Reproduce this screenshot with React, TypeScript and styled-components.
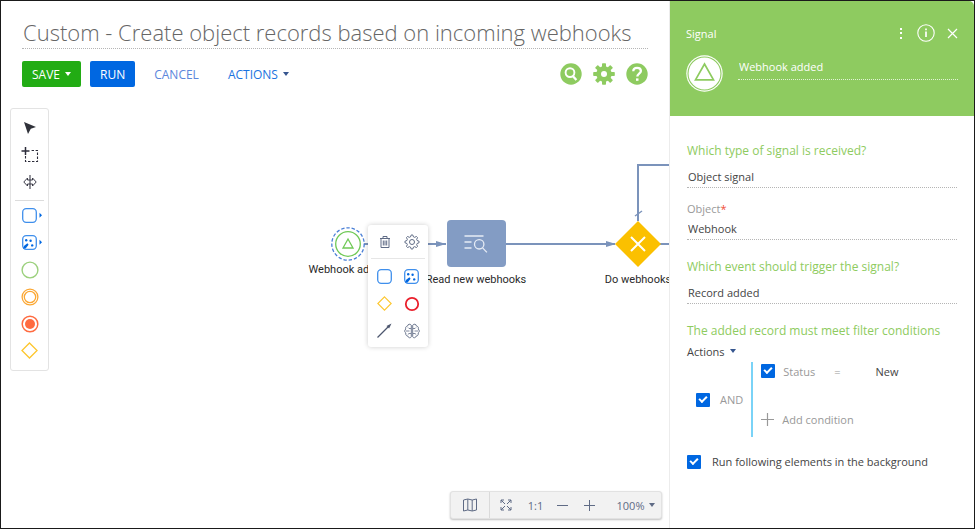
import React from "react";
import styled, { createGlobalStyle, css } from "styled-components";

const GlobalStyle = createGlobalStyle`
  *, *::before, *::after { box-sizing: border-box; }
  body {
    margin: 0;
    background: #fff;
    color: #444;
    font-family: "Open Sans", "Noto Sans", sans-serif;
    font-size: 11px;
  }
  button, input, select { font: inherit; color: inherit; margin: 0; }
  button { cursor: pointer; border: 0; padding: 0; background: none; }
  svg { display: block; flex: none; }
`;

const green = "#8ecb60";
const blue = "#0067e1";
const steel = "#7b93bb";
const slate = "#5f6b85";

/* ---------- page ---------- */

const Frame = styled.div`
  display: flex;
  min-height: 100vh;
  border: 1px solid #1a1a1a;
`;

const Workspace = styled.main`
  flex: 1;
  min-width: 0;
  display: flex;
  flex-direction: column;
`;

const Header = styled.header`
  padding: 15px 21px 14px;
`;

const TitleInput = styled.input`
  display: block;
  width: 100%;
  height: 33px;
  padding: 0 1px;
  border: 0;
  border-bottom: 1px dotted #b5b5b5;
  outline: 0;
  background: none;
  color: #666;
  font-size: 22px;
  font-weight: 300;
`;

const Toolbar = styled.div`
  display: flex;
  align-items: center;
  gap: 9px;
  margin-top: 12px;
`;

const ToolbarButton = styled.button<{ $kind: "save" | "run" | "link" | "plain" }>`
  display: flex;
  align-items: center;
  gap: 5px;
  height: 26px;
  padding: 0 10px;
  border-radius: 2px;
  font-size: 12px;
  color: #fff;
  ${({ $kind }) => $kind === "save" && css`background: #22ac14;`}
  ${({ $kind }) => $kind === "run" && css`background: ${blue};`}
  ${({ $kind }) => $kind === "link" && css`color: #5b86dc;`}
  ${({ $kind }) => $kind === "plain" && css`color: #1a73e0;`}
`;

const Caret = styled.span`
  width: 0;
  height: 0;
  border: 3px solid transparent;
  border-top: 4px solid currentColor;
  border-bottom: 0;
`;

const NavyCaret = styled(Caret)`
  color: #36568f;
`;

const HeaderIcons = styled.div`
  display: flex;
  gap: 11px;
  margin-left: auto;
`;

const IconButton = styled.button`
  display: flex;
  align-items: center;
  justify-content: center;
`;

/* ---------- canvas ---------- */

const Canvas = styled.section`
  position: relative;
  flex: 1;
  min-height: 400px;
  overflow: hidden;
`;

const Edges = styled.svg`
  position: absolute;
  inset: 0;
  width: 100%;
  height: 100%;
`;

const Node = styled.div<{ $x: number; $y: number }>`
  position: absolute;
  left: ${({ $x }) => $x}px;
  top: ${({ $y }) => $y}px;
  display: flex;
  flex-direction: column;
  align-items: center;
  width: 100px;
`;

const NodeLabel = styled.span<{ $gap: number }>`
  margin-top: ${({ $gap }) => $gap}px;
  font-family: Roboto, "Open Sans", sans-serif;
  line-height: 16px;
  white-space: nowrap;
  color: #2a2a2a;
`;

const TaskBox = styled.div`
  display: flex;
  align-items: center;
  justify-content: center;
  width: 59px;
  height: 47px;
  border-radius: 4px;
  background: #839cc4;
`;

const Palette = styled.nav`
  position: absolute;
  left: 9px;
  top: 7px;
  display: flex;
  flex-direction: column;
  width: 39px;
  padding: 5px 0 6px;
  border: 1px solid #e3e3e3;
  border-radius: 3px;
  background: #fff;
`;

const PaletteButton = styled(IconButton)`
  height: 27px;
`;

const PaletteRule = styled.hr`
  width: 29px;
  margin: 5px auto 1px;
  border: 0;
  border-top: 1px solid #dcdcdc;
`;

const ContextMenu = styled.div`
  position: absolute;
  left: 367px;
  top: 124px;
  width: 60px;
  padding: 3px;
  border-radius: 3px;
  background: #fff;
  box-shadow: 0 0 5px rgba(0, 0, 0, 0.2);
`;

const MenuGrid = styled.div<{ $ruled?: boolean }>`
  display: grid;
  grid-template-columns: 1fr 1fr;
  grid-auto-rows: 27px;
  ${({ $ruled }) =>
    $ruled &&
    css`
      padding-bottom: 3px;
      margin-bottom: 4px;
      border-bottom: 1px solid #e6e6e6;
    `}
`;

const ZoomBar = styled.div`
  position: absolute;
  right: 7px;
  bottom: 9px;
  display: flex;
  align-items: center;
  width: 212px;
  height: 28px;
  border: 1px solid #e2e2e2;
  border-radius: 3px;
  background: #f2f2f2;
  color: ${slate};
  box-shadow: 0 1px 2px rgba(0, 0, 0, 0.25);
`;

const MapButton = styled(IconButton)`
  width: 39px;
  height: 100%;
  border-right: 1px solid #dadada;
`;

const ZoomStep = styled(IconButton)<{ $grow?: boolean }>`
  height: 100%;
  flex: ${({ $grow }) => ($grow ? "1" : "0 0 27px")};
  gap: 5px;
  padding-left: ${({ $grow }) => ($grow ? "8px" : "0")};
`;

const FitButton = styled(ZoomStep)`
  flex-basis: 32px;
`;

/* ---------- properties panel ---------- */

const Panel = styled.aside`
  flex: none;
  width: 305px;
  border-left: 1px solid #ececec;
`;

const PanelHead = styled.header`
  padding: 20px 16px 21px;
  border-top-right-radius: 5px;
  background: ${green};
  color: #fff;
`;

const PanelTop = styled.div`
  display: flex;
  align-items: center;
  justify-content: space-between;
  height: 24px;
`;

const PanelKind = styled.h2`
  margin: 0;
  font-size: 11px;
  font-weight: 400;
`;

const PanelActions = styled.div`
  display: flex;
  align-items: center;
  gap: 12px;
`;

const NameRow = styled.div`
  display: flex;
  gap: 15px;
  margin-top: 10px;
  height: 40px;
`;

const NameInput = styled.input`
  flex: 1;
  min-width: 0;
  height: 25px;
  padding: 0 1px 2px;
  border: 0;
  border-bottom: 1px dotted #e2f3d6;
  outline: 0;
  background: none;
`;

const PanelBody = styled.form`
  padding: 25px 17px 20px;
`;

const questionStyle = css`
  display: block;
  margin: 0;
  font-size: 12px;
  font-weight: 400;
  line-height: 20px;
  color: ${green};
`;

const Question = styled.label`
  ${questionStyle}
`;

const SectionTitle = styled.h3`
  ${questionStyle}
`;

const fieldStyle = css`
  display: block;
  width: 100%;
  height: 23px;
  padding: 0 1px;
  border: 0;
  border-bottom: 1px dotted #b5b5b5;
  border-radius: 0;
  outline: 0;
  background: none;
  color: #444;
`;

const Select = styled.select`
  ${fieldStyle}
  appearance: none;
  margin: 4px 0 0;
`;

const LookupInput = styled.input`
  ${fieldStyle}
`;

const FieldBlock = styled.div`
  margin: 12px 0 17px;
`;

const FieldLabel = styled.label`
  display: block;
  line-height: 17px;
  color: #999;
`;

const Required = styled.span`
  color: #f04e37;
`;

const Spaced = styled.div`
  margin-bottom: 17px;
`;

const ActionsMenu = styled.button`
  display: flex;
  align-items: center;
  gap: 5px;
  height: 20px;
`;

const FilterGroup = styled.div`
  display: flex;
  align-items: center;
  margin-top: 1px;
  padding-left: 9px;
`;

const CheckLabel = styled.label<{ $muted?: boolean; $gap: number }>`
  display: flex;
  align-items: center;
  gap: ${({ $gap }) => $gap}px;
  color: ${({ $muted }) => ($muted ? "#999" : "#444")};
`;

const CheckInput = styled.input`
  appearance: none;
  flex: none;
  width: 14px;
  height: 14px;
  border-radius: 1px;
  background: ${blue};
  display: grid;
  place-items: center;

  &:checked::after {
    content: "";
    width: 8px;
    height: 5px;
    margin-bottom: 3px;
    border: solid #fff;
    border-width: 0 0 2px 2px;
    transform: rotate(-45deg);
  }
`;

const Conditions = styled.div`
  display: flex;
  flex-direction: column;
  justify-content: space-between;
  flex: 1;
  height: 75px;
  margin-left: 8px;
  padding: 0 0 9px 8px;
  border-left: 2px solid #7ad3f7;
`;

const ConditionRow = styled.div`
  display: flex;
  align-items: center;
  height: 18px;
  color: #999;
`;

const Operator = styled.span`
  margin-left: 19px;
`;

const ConditionValue = styled.span`
  margin-left: 35px;
  color: #444;
`;

const AddCondition = styled.button`
  display: flex;
  align-items: center;
  gap: 8px;
  height: 18px;
  color: #999;
`;

const BackgroundOption = styled.div`
  margin-top: 17px;
`;

/* ---------- icons ---------- */

const SearchIcon = () => (
  <svg width="22" height="22" viewBox="0 0 22 22" fill="none">
    <circle cx="11" cy="11" r="10.7" fill={green} />
    <circle cx="10" cy="9.6" r="4.4" stroke="#fff" strokeWidth="1.9" />
    <path d="M12.8 13l3.6 4" stroke="#fff" strokeWidth="2.3" />
  </svg>
);

const SettingsIcon = () => (
  <svg width="22" height="22" viewBox="-11 -11 22 22">
    <g fill={green}>
      {[0, 45, 90, 135].map((a) => (
        <rect key={a} x="-2" y="-10.8" width="4" height="21.6" rx="0.8" transform={`rotate(${a})`} />
      ))}
      <circle r="7.7" />
    </g>
    <circle r="3" fill="#fff" />
  </svg>
);

const HelpIcon = () => (
  <svg width="22" height="22" viewBox="0 0 22 22" fill="none">
    <circle cx="11" cy="11" r="10.7" fill={green} />
    <path d="M7.3 8.3c0-2.2 1.5-3.5 3.8-3.5s3.8 1.3 3.8 3.2c0 2.6-3.6 2.7-3.6 5.6" stroke="#fff" strokeWidth="2.3" />
    <rect x="10" y="15.4" width="2.5" height="2.4" fill="#fff" />
  </svg>
);

const PointerIcon = () => (
  <svg width="14" height="14" viewBox="0 0 14 14">
    <path d="M1 1l12 5-5.2 1.8L5 13z" fill="#30323a" />
  </svg>
);

const MarqueeIcon = () => (
  <svg width="18" height="16" viewBox="0 0 18 16" fill="none" stroke="#2c2c3a">
    <path d="M4.5 0v8M.5 4h8" strokeWidth="1.5" />
    <path d="M4.5 9v5.5h12V3.5H10" strokeDasharray="2.4 1.6" strokeWidth="1.1" />
  </svg>
);

const SplitIcon = () => (
  <svg width="14" height="14" viewBox="0 0 14 14" fill="none" stroke="#3b3b48">
    <path d="M7 0v14" strokeWidth="1.1" />
    <path d="M4.5 3L.8 7l3.7 4V9h5v2l3.7-4-3.7-4v2h-5z" />
  </svg>
);

const Dots = () => (
  <g fill={blue}>
    <circle cx="4.2" cy="5.2" r="1.2" />
    <circle cx="8.6" cy="5.8" r="1.2" />
    <circle cx="10.2" cy="10.4" r="1.2" />
    <path d="M1 13.5l1.2-2.8 3.2-2.5 1.2 1.5-3 3.8z" />
  </g>
);

const TaskIcon = ({ dots, arrow }: { dots?: boolean; arrow?: boolean }) => (
  <svg width={arrow ? 27 : 15} height="15" viewBox={arrow ? "-6 0 27 15" : "0 0 15 15"} fill="none">
    <rect x="0.7" y="0.7" width="13.6" height="13.6" rx="3.5" stroke="#3f8fec" strokeWidth="1.3" />
    {dots && <Dots />}
    {arrow && <path d="M17.5 4.8v5l2.5-2.5z" fill={blue} />}
  </svg>
);

const StartIcon = () => (
  <svg width="18" height="18" viewBox="0 0 18 18" fill="none">
    <circle cx="9" cy="9" r="7.9" stroke="#9bd07c" strokeWidth="1.4" />
  </svg>
);

const IntermediateIcon = () => (
  <svg width="18" height="18" viewBox="0 0 18 18" fill="none" stroke="#fba733">
    <circle cx="9" cy="9" r="7.9" strokeWidth="1.3" />
    <circle cx="9" cy="9" r="5.7" strokeWidth="1.3" />
  </svg>
);

const TerminateIcon = () => (
  <svg width="18" height="18" viewBox="0 0 18 18" fill="none">
    <circle cx="9" cy="9" r="7.8" stroke="#ff6b40" strokeWidth="1.5" />
    <circle cx="9" cy="9" r="5" fill="#ff6b40" />
  </svg>
);

const EndIcon = () => (
  <svg width="16" height="16" viewBox="0 0 16 16" fill="none">
    <circle cx="8" cy="8" r="6.2" stroke="#ea1f2b" strokeWidth="1.8" />
  </svg>
);

const GatewayIcon = ({ size }: { size: number }) => (
  <svg width={size} height={size} viewBox="0 0 16 16" fill="none">
    <path d="M8 .9L15.1 8 8 15.1.9 8z" stroke="#fdc62e" strokeWidth="1.2" />
  </svg>
);

const TrashIcon = () => (
  <svg width="12" height="14" viewBox="0 0 12 14" fill="none" stroke={slate}>
    <path d="M1 3.5h10M4 3V1.5h4V3M2 3.5v9h8v-9M4.3 5.5v5M6 5.5v5M7.7 5.5v5" />
  </svg>
);

const GearIcon = () => (
  <svg width="16" height="16" viewBox="-8 -8 16 16" fill="none" stroke={slate}>
    <path
      d={
        Array.from({ length: 32 }, (_, i) => {
          const radius = i % 4 < 2 ? 7.1 : 5.3;
          const angle = ((i - 0.5) * Math.PI) / 16;
          return `${i ? "L" : "M"}${(radius * Math.sin(angle)).toFixed(2)} ${(-radius * Math.cos(angle)).toFixed(2)}`;
        }).join("") + "z"
      }
      strokeWidth="1"
      strokeLinejoin="round"
    />
    <circle r="2.5" />
  </svg>
);

const ConnectorIcon = () => (
  <svg width="15" height="15" viewBox="0 0 15 15">
    <path d="M.5 14.5L11 4" stroke="#4c566e" strokeWidth="1.3" />
    <path d="M14.5.5l-2.4 5-2.6-2.6z" fill="#4c566e" />
  </svg>
);

const BrainIcon = () => (
  <svg width="16" height="16" viewBox="0 0 16 16" fill="none" stroke={slate} strokeLinejoin="round">
    <path d="M7.3 2.2C6 .5 3.8 1 3.6 3 1.5 3.4 1.3 5 1.8 6 .3 7.2.4 9.2 1.8 10c-.4 1.8.6 3 2 3.1.5 1.9 2.7 2.3 3.5.7zM8.7 2.2C10 .5 12.2 1 12.4 3c2.1.4 2.3 2 1.8 3 1.5 1.2 1.4 3.2 0 4 .4 1.8-.6 3-2 3.1-.5 1.9-2.7 2.3-3.5.7z" strokeWidth=".9" />
    <path d="M7 5.5H5L4 4.500M2 8h3.500M7 10.500H5l-1.200 1M9 5.500h2l1-1M14 8h-3.500M9 10.500h2l1.200 1" strokeWidth=".8" />
  </svg>
);

const QueryIcon = () => (
  <svg width="24" height="20" viewBox="0 0 24 20" fill="none" stroke="#e6ecf5" strokeWidth="1.3">
    <path d="M.5 2h19M.5 8h7M.5 14h7" />
    <circle cx="15.2" cy="10.3" r="4.7" />
    <path d="M18.6 13.9l4.3 4.5" />
  </svg>
);

const MapIcon = () => (
  <svg width="16" height="14" viewBox="0 0 16 14" fill="none" stroke={slate}>
    <path d="M1.5 2l4.3-1 4.4 1 4.3-1v11l-4.3 1-4.4-1-4.3 1zM5.8 1v11M10.2 2v11" />
  </svg>
);

const FitIcon = () => (
  <svg width="12" height="12" viewBox="0 0 12 12" fill="none" stroke={slate}>
    <path d="M1 4V1h3M8 1h3v3M11 8v3H8M4 11H1V8M1 1l4 4M11 1L7 5M11 11L7 7M1 11l4-4" />
  </svg>
);

const DotsIcon = () => (
  <svg width="8" height="13" viewBox="0 0 8 13" fill="#fff">
    <rect x="3" y="1" width="2" height="2" />
    <rect x="3" y="5" width="2" height="2" />
    <rect x="3" y="10" width="2" height="2" />
  </svg>
);

const InfoIcon = () => (
  <svg width="18" height="18" viewBox="0 0 18 18" fill="none" stroke="#fff">
    <circle cx="9" cy="9" r="8.2" strokeWidth="1.1" />
    <path d="M9 7.6v5.4M9 4.5v1.8" strokeWidth="1.7" />
  </svg>
);

const CloseIcon = () => (
  <svg width="11" height="11" viewBox="0 0 11 11" stroke="#fff" strokeWidth="1.2">
    <path d="M1 1l9 9M10 1l-9 9" />
  </svg>
);

const SignalBadge = () => (
  <svg width="37" height="37" viewBox="0 0 37 37" fill="none">
    <circle cx="18.5" cy="18.5" r="18.2" fill="#fff" />
    <circle cx="18.5" cy="18.5" r="16.5" stroke={green} strokeWidth="1.1" />
    <path d="M18.5 9l9 15.8h-18z" stroke={green} strokeWidth="1.7" />
  </svg>
);

const SignalNode = () => (
  <svg width="34" height="34" viewBox="0 0 34 34" fill="none">
    <circle cx="17" cy="17" r="16.2" fill="#fff" stroke="#4a7fd6" strokeWidth="1.3" strokeDasharray="3.4 1.9" />
    <circle cx="17" cy="17" r="12.3" stroke="#70c956" strokeWidth="1.3" />
    <path d="M17 12l5 9H12z" stroke="#70c956" strokeWidth="1.3" />
  </svg>
);

const GatewayNode = () => (
  <svg width="46" height="46" viewBox="0 0 46 46">
    <path d="M23 0l23 23-23 23L0 23z" fill="#fbc000" />
    <path d="M16 16l14 14M30 16L16 30" stroke="#fff" strokeWidth="2" />
  </svg>
);

const Stroke = ({ plus, size = 11 }: { plus?: boolean; size?: number }) => (
  <svg width={size} height={size} viewBox="0 0 11 11" stroke="currentColor">
    <path d={plus ? "M0 5.5h11M5.5 0v11" : "M0 5.5h11"} strokeWidth="1" />
  </svg>
);

/* ---------- sections ---------- */

const paletteTools = [
  { name: "Select", icon: <PointerIcon /> },
  { name: "Area selection", icon: <MarqueeIcon /> },
  { name: "Shift elements", icon: <SplitIcon /> },
];

const paletteElements = [
  { name: "User action", icon: <TaskIcon arrow /> },
  { name: "System action", icon: <TaskIcon arrow dots /> },
  { name: "Start event", icon: <StartIcon /> },
  { name: "Intermediate event", icon: <IntermediateIcon /> },
  { name: "Terminate", icon: <TerminateIcon /> },
  { name: "Gateway", icon: <GatewayIcon size={17} /> },
];

const menuElements = [
  { name: "Add user action", icon: <TaskIcon /> },
  { name: "Add system action", icon: <TaskIcon dots /> },
  { name: "Add gateway", icon: <GatewayIcon size={15} /> },
  { name: "Add end event", icon: <EndIcon /> },
  { name: "Connect", icon: <ConnectorIcon /> },
  { name: "Predict", icon: <BrainIcon /> },
];

const Diagram = () => (
  <Canvas>
    <Edges aria-hidden="true">
      <g fill="none" stroke={steel} strokeWidth="2">
        <path d="M359 143h86M504 143h110M659 143h40M637 120V64h62" />
        <path d="M634 115l7-5" strokeWidth="1.4" />
      </g>
      <path d="M435 140l10 3-10 3zM605 140l10 3-10 3z" fill={steel} />
    </Edges>
    <Node $x={297} $y={126}>
      <SignalNode />
      <NodeLabel $gap={1}>Webhook added</NodeLabel>
    </Node>
    <Node $x={425} $y={119}>
      <TaskBox>
        <QueryIcon />
      </TaskBox>
      <NodeLabel $gap={5}>Read new webhooks</NodeLabel>
    </Node>
    <Node $x={587} $y={120}>
      <GatewayNode />
      <NodeLabel $gap={5}>Do webhooks</NodeLabel>
    </Node>

    <ContextMenu>
      <MenuGrid $ruled>
        <IconButton aria-label="Delete"><TrashIcon /></IconButton>
        <IconButton aria-label="Settings"><GearIcon /></IconButton>
      </MenuGrid>
      <MenuGrid>
        {menuElements.map((item) => (
          <IconButton key={item.name} aria-label={item.name}>{item.icon}</IconButton>
        ))}
      </MenuGrid>
    </ContextMenu>

    <Palette aria-label="Elements">
      {paletteTools.map((item) => (
        <PaletteButton key={item.name} aria-label={item.name}>{item.icon}</PaletteButton>
      ))}
      <PaletteRule />
      {paletteElements.map((item) => (
        <PaletteButton key={item.name} aria-label={item.name}>{item.icon}</PaletteButton>
      ))}
    </Palette>

    <ZoomBar>
      <MapButton aria-label="Map"><MapIcon /></MapButton>
      <FitButton aria-label="Fit to screen"><FitIcon /></FitButton>
      <ZoomStep>1:1</ZoomStep>
      <ZoomStep aria-label="Zoom out"><Stroke /></ZoomStep>
      <ZoomStep aria-label="Zoom in"><Stroke plus /></ZoomStep>
      <ZoomStep $grow>100% <Caret /></ZoomStep>
    </ZoomBar>
  </Canvas>
);

const PropertiesPanel = () => (
  <Panel>
    <PanelHead>
      <PanelTop>
        <PanelKind>Signal</PanelKind>
        <PanelActions>
          <IconButton aria-label="More"><DotsIcon /></IconButton>
          <IconButton aria-label="Information"><InfoIcon /></IconButton>
          <IconButton aria-label="Close"><CloseIcon /></IconButton>
        </PanelActions>
      </PanelTop>
      <NameRow>
        <SignalBadge />
        <NameInput aria-label="Element name" defaultValue="Webhook added" />
      </NameRow>
    </PanelHead>
    <PanelBody>
      <Question htmlFor="signal-type">Which type of signal is received?</Question>
      <Select id="signal-type">
        <option>Object signal</option>
      </Select>
      <FieldBlock>
        <FieldLabel htmlFor="object">
          Object<Required>*</Required>
        </FieldLabel>
        <LookupInput id="object" defaultValue="Webhook" />
      </FieldBlock>
      <Spaced>
        <Question htmlFor="event">Which event should trigger the signal?</Question>
        <Select id="event">
          <option>Record added</option>
        </Select>
      </Spaced>
      <SectionTitle>The added record must meet filter conditions</SectionTitle>
      <ActionsMenu type="button">
        Actions <NavyCaret />
      </ActionsMenu>
      <FilterGroup>
        <CheckLabel $muted $gap={10}>
          <CheckInput type="checkbox" defaultChecked />
          AND
        </CheckLabel>
        <Conditions>
          <ConditionRow>
            <CheckLabel $muted $gap={8}>
              <CheckInput type="checkbox" defaultChecked />
              Status
            </CheckLabel>
            <Operator>=</Operator>
            <ConditionValue>New</ConditionValue>
          </ConditionRow>
          <AddCondition type="button">
            <Stroke plus size={13} /> Add condition
          </AddCondition>
        </Conditions>
      </FilterGroup>
      <BackgroundOption>
        <CheckLabel $gap={11}>
          <CheckInput type="checkbox" defaultChecked />
          Run following elements in the background
        </CheckLabel>
      </BackgroundOption>
    </PanelBody>
  </Panel>
);

export default function App() {
  return (
    <>
      <GlobalStyle />
      <Frame>
        <Workspace>
          <Header>
            <TitleInput
              aria-label="Process name"
              defaultValue="Custom - Create object records based on incoming webhooks"
            />
            <Toolbar>
              <ToolbarButton $kind="save">SAVE <Caret /></ToolbarButton>
              <ToolbarButton $kind="run">RUN</ToolbarButton>
              <ToolbarButton $kind="link">CANCEL</ToolbarButton>
              <ToolbarButton $kind="plain">ACTIONS <NavyCaret /></ToolbarButton>
              <HeaderIcons>
                <IconButton aria-label="Search"><SearchIcon /></IconButton>
                <IconButton aria-label="Settings"><SettingsIcon /></IconButton>
                <IconButton aria-label="Help"><HelpIcon /></IconButton>
              </HeaderIcons>
            </Toolbar>
          </Header>
          <Diagram />
        </Workspace>
        <PropertiesPanel />
      </Frame>
    </>
  );
}
